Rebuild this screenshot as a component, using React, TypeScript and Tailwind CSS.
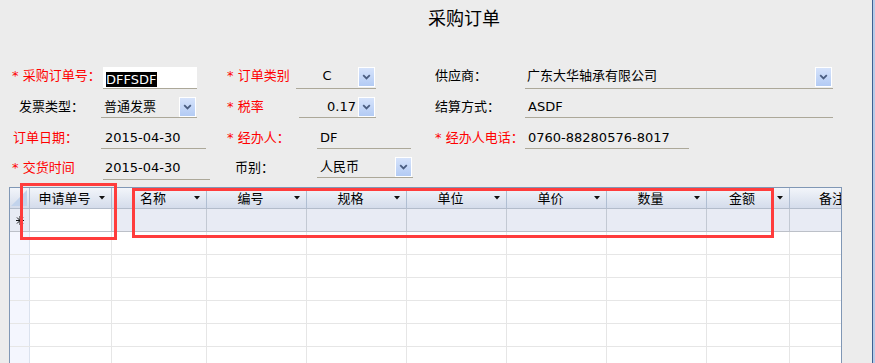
import React from "react";

const UL = "border-b border-[#aca899]";

const DropBtn = () => (
  <div className="w-[17px] h-[20px] border border-white bg-linear-to-b from-[#d6e3fb] to-[#b3cbf4] flex items-center justify-center shrink-0">
    <svg width="9" height="6" viewBox="0 0 9 6">
      <path d="M1.2 1.2 L4.5 4.4 L7.8 1.2" stroke="#4a5d80" strokeWidth="1.8" fill="none" />
    </svg>
  </div>
);

const Arrow = () => (
  <svg width="6" height="4" viewBox="0 0 6 4" className="shrink-0">
    <polygon points="0,0 6,0 3,3.5" fill="#111" />
  </svg>
);

const Red = ({ children }: { children: React.ReactNode }) => (
  <span className="text-[#ff0000]">{children}</span>
);

type Col = { name: string; w: string };

const cols: Col[] = [
  { name: "申请单号", w: "w-[82px]" },
  { name: "名称", w: "w-[95px]" },
  { name: "编号", w: "w-[100px]" },
  { name: "规格", w: "w-[100px]" },
  { name: "单位", w: "w-[100px]" },
  { name: "单价", w: "w-[100px]" },
  { name: "数量", w: "w-[100px]" },
  { name: "金额", w: "w-[83px]" },
];

export default function App() {
  const rows = [0, 1, 2, 3, 4, 5];
  return (
    <div className="relative w-[875px] h-[363px] overflow-hidden bg-[#ececec] flex text-[13px] text-black font-['DejaVu_Sans','Noto_Sans_CJK_SC',sans-serif]">
      <div className="w-[872px] flex flex-col">
        {/* title */}
        <div className="h-[62px] pt-[5px] pl-[428px] text-[18px] leading-[24px] font-['Noto_Sans_CJK_SC',sans-serif]">
          采购订单
        </div>

        {/* row 1 */}
        <div className="flex h-[30px] items-start">
          <div className="ml-[12px] w-[89px] leading-[28px] whitespace-nowrap"><Red>* 采购订单号：</Red></div>
          <div className="ml-[2px] w-[94px] h-[27px] flex items-start">
            <div className={`mt-[5px] w-full h-[22px] bg-white ${UL} pl-[3px] pt-[3px]`}>
              <span className="inline-block bg-black text-white leading-[15px] pr-[1px]">DFFSDF</span>
            </div>
          </div>
          <div className="ml-[30px] w-[69px] leading-[28px] whitespace-nowrap"><Red>* 订单类别</Red></div>
          <div className={`w-[80px] h-[27px] ${UL} flex items-start pt-[5px] pr-[1px]`}>
            <div className="flex-1 text-center leading-[18px]">C</div>
            <DropBtn />
          </div>
          <div className="ml-[59px] w-[90px] leading-[28px]">供应商：</div>
          <div className={`w-[308px] h-[27px] ${UL} flex items-start pt-[5px] pr-[1px]`}>
            <div className="flex-1 pl-[2px] leading-[18px]">广东大华轴承有限公司</div>
            <DropBtn />
          </div>
        </div>

        {/* row 2 */}
        <div className="flex h-[31px] items-start">
          <div className="ml-[19px] w-[82px] leading-[29px]">发票类型：</div>
          <div className={`w-[96px] h-[26px] ${UL} flex items-start pt-[5px] pr-[1px]`}>
            <div className="flex-1 pl-[3px] leading-[19px]">普通发票</div>
            <DropBtn />
          </div>
          <div className="ml-[30px] w-[72px] leading-[29px] whitespace-nowrap"><Red>* 税率</Red></div>
          <div className={`w-[77px] h-[26px] ${UL} flex items-start pt-[5px] pr-[1px]`}>
            <div className="flex-1 text-right pr-[2px] leading-[19px]">0.17</div>
            <DropBtn />
          </div>
          <div className="ml-[59px] w-[90px] leading-[29px]">结算方式：</div>
          <div className={`w-[308px] h-[26px] ${UL} pl-[3px] pt-[5px] leading-[19px]`}>ASDF</div>
        </div>

        {/* row 3 */}
        <div className="flex h-[30px] items-start">
          <div className="ml-[13px] w-[88px] leading-[29px] whitespace-nowrap"><Red>订单日期：</Red></div>
          <div className={`w-[105px] h-[26px] ${UL} pl-[4px] pt-[5px] leading-[19px]`}>2015-04-30</div>
          <div className="ml-[21px] w-[90px] leading-[29px] whitespace-nowrap"><Red>* 经办人：</Red></div>
          <div className={`w-[94px] h-[26px] ${UL} pl-[3px] pt-[5px] leading-[19px]`}>DF</div>
          <div className="ml-[24px] w-[90px] leading-[29px] whitespace-nowrap"><Red>* 经办人电话：</Red></div>
          <div className={`w-[164px] h-[26px] ${UL} pl-[3px] pt-[5px] leading-[19px]`}>0760-88280576-8017</div>
        </div>

        {/* row 4 */}
        <div className="flex h-[30px] items-start">
          <div className="ml-[12px] w-[91px] leading-[29px] whitespace-nowrap"><Red>* 交货时间</Red></div>
          <div className={`w-[107px] h-[27px] ${UL} pl-[2px] pt-[5px] leading-[19px]`}>2015-04-30</div>
          <div className="ml-[25px] w-[82px] leading-[29px]">币别：</div>
          <div className={`w-[96px] h-[25px] ${UL} flex items-start pt-[4px] pr-[1px]`}>
            <div className="flex-1 pl-[3px] leading-[19px]">人民币</div>
            <DropBtn />
          </div>
        </div>

        {/* grid */}
        <div className="mt-[4px] ml-[9px] w-[833px] flex-1 border-l border-t border-r border-[#8097b5] bg-white flex flex-col overflow-hidden font-['Noto_Sans_CJK_SC',sans-serif]">
          {/* header */}
          <div className="flex h-[21px] border-b border-[#b3bccb] bg-linear-to-b from-[#f2f5fa] to-[#d4dceb] shrink-0">
            <div className="w-[20px] border-r border-[#b0bed2] relative">
              <svg width="19" height="20" viewBox="0 0 19 20" className="block">
                <polygon points="17,2 17,18 1,18" fill="#c2d3ec" />
              </svg>
            </div>
            {cols.map((c) => (
              <div key={c.name} className={`${c.w} border-r border-[#b0bed2] flex items-center pr-[6px]`}>
                <div className="flex-1 text-center leading-[20px]">{c.name}</div>
                <Arrow />
              </div>
            ))}
            <div className="flex-1 overflow-hidden whitespace-nowrap pl-[29px] leading-[20px]">备注</div>
          </div>
          {/* new row */}
          <div className="flex h-[23px] border-b border-[#bcc0c8] bg-[#e8ebf4] shrink-0">
            <div className="w-[20px] border-r border-[#c3c9d3] flex items-center justify-center pl-[1px]">
              <svg width="8" height="9" viewBox="0 0 8 9">
                <path d="M4 0 V9 M0 4.5 H8 M1 1.5 L7 7.5 M7 1.5 L1 7.5" stroke="#111" strokeWidth="1" fill="none" />
              </svg>
            </div>
            <div className="w-[82px] border-r border-[#c3c9d3] bg-white"></div>
            {cols.slice(1).map((c) => (
              <div key={c.name} className={`${c.w} border-r border-[#c3c9d3]`}></div>
            ))}
            <div className="flex-1"></div>
          </div>
          {rows.map((r) => (
            <div key={r} className="flex h-[23px] border-b border-[#e6e6e6] shrink-0">
              <div className="w-[20px] border-r border-[#dbe2ee] bg-[#f4f6fe]"></div>
              {cols.map((c) => (
                <div key={c.name} className={`${c.w} border-r border-[#e6e6e6]`}></div>
              ))}
              <div className="flex-1"></div>
            </div>
          ))}
        </div>
      </div>
      <div className="w-[3px] border-l border-[#3f6092] bg-[#b8cbe8]"></div>

      {/* red annotation boxes */}
      <div className="absolute left-[20px] top-[183px] w-[97px] h-[57px] border-[3px] border-[#ff3c3c]"></div>
      <div className="absolute left-[132px] top-[188px] w-[642px] h-[50px] border-[3px] border-[#ff3c3c]"></div>
    </div>
  );
}
